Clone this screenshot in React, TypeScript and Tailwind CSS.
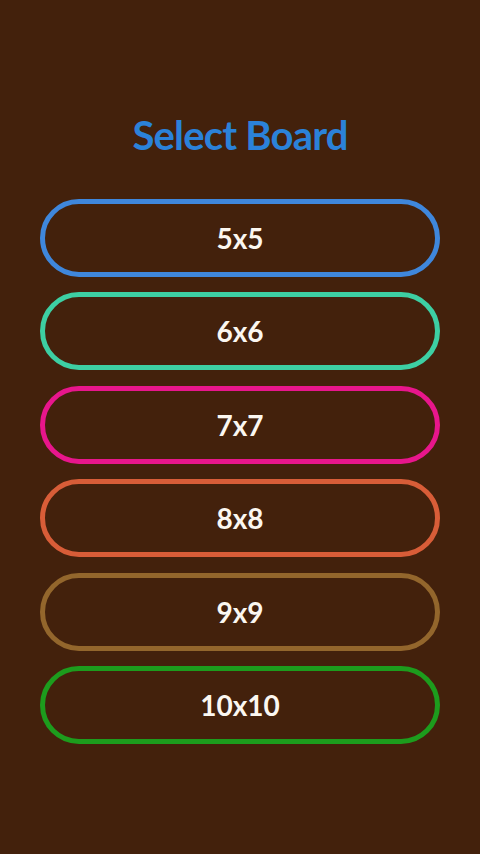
import React from 'react';

const boards = [
  { label: '5x5', border: 'border-[#3f87dc]' },
  { label: '6x6', border: 'border-[#3dcfa3]' },
  { label: '7x7', border: 'border-[#e8168c]' },
  { label: '8x8', border: 'border-[#d85d38]' },
  { label: '9x9', border: 'border-[#93662c]' },
  { label: '10x10', border: 'border-[#1d9c1d]' },
];

const App: React.FC = () => {
  return (
    <div className="min-h-[854px] w-full bg-[#43210c] flex flex-col items-center font-['Lato','Noto_Sans',sans-serif]">
      <h1 className="mt-[110px] text-[40px] leading-[50px] font-bold tracking-[-0.8px] text-[#2b82d9]">
        Select Board
      </h1>
      <div className="mt-[39px] w-full px-10 flex flex-col gap-[15.4px]">
        {boards.map((b) => (
          <button
            key={b.label}
            className={`h-[78px] w-full rounded-full border-[5px] ${b.border} flex items-center justify-center text-[28px] font-bold text-[#fbf7f1]`}
          >
            {b.label}
          </button>
        ))}
      </div>
    </div>
  );
};

export default App;
